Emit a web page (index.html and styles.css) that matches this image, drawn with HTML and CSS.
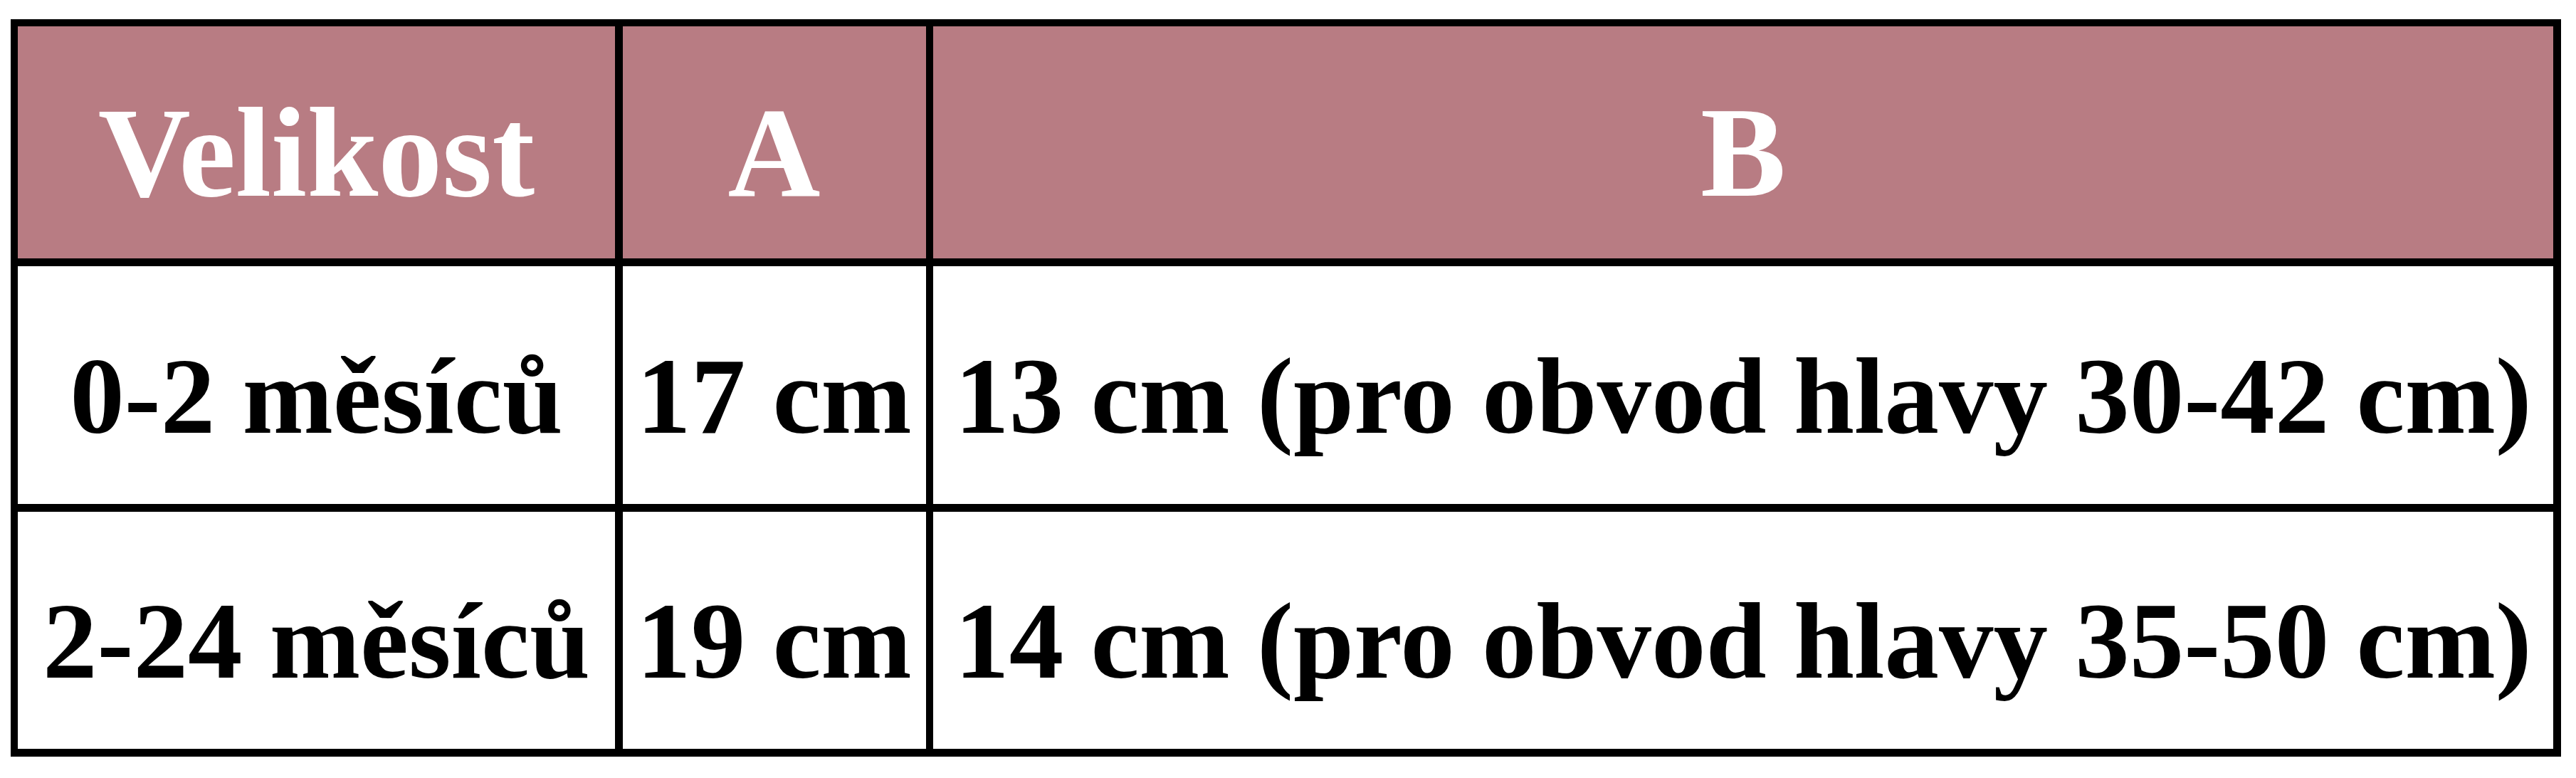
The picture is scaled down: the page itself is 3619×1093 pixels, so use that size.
FILE: index.html
```html
<!DOCTYPE html>
<html lang="cs">
<head>
<meta charset="utf-8">
<title>Velikostní tabulka</title>
<link rel="stylesheet" href="styles.css">
</head>
<body>
<div class="size-table">
  <div class="cell head">Velikost</div>
  <div class="cell head">A</div>
  <div class="cell head">B</div>
  <div class="cell body">0-2 měsíců</div>
  <div class="cell body">17 cm</div>
  <div class="cell body">13 cm (pro obvod hlavy 30-42 cm)</div>
  <div class="cell body">2-24 měsíců</div>
  <div class="cell body">19 cm</div>
  <div class="cell body">14 cm (pro obvod hlavy 35-50 cm)</div>
</div>
</body>
</html>
```
FILE: styles.css
```css
html {
  background: #ffffff;
}
body {
  margin: 0;
  padding: 27px 0 0 15px;
  font-family: "Liberation Serif", "DejaVu Serif", serif;
  font-weight: bold;
  font-variant-numeric: oldstyle-nums;
}
.size-table {
  display: grid;
  width: 3583px;
  box-sizing: border-box;
  grid-template-columns: 839px 426px 1fr;
  grid-template-rows: 326px 334px 333px;
  column-gap: 10.5px;
  row-gap: 11px;
  padding: 10px 11px 11px 10px;
  background: #000000;
}
.cell {
  display: flex;
  align-items: center;
  justify-content: center;
  white-space: nowrap;
  line-height: 1;
}
.head {
  background: #b87c83;
  color: #ffffff;
  font-size: 180px;
  padding-top: 30px;
}
.body {
  background: #ffffff;
  color: #000000;
  font-size: 153px;
  padding-top: 30px;
}
```
